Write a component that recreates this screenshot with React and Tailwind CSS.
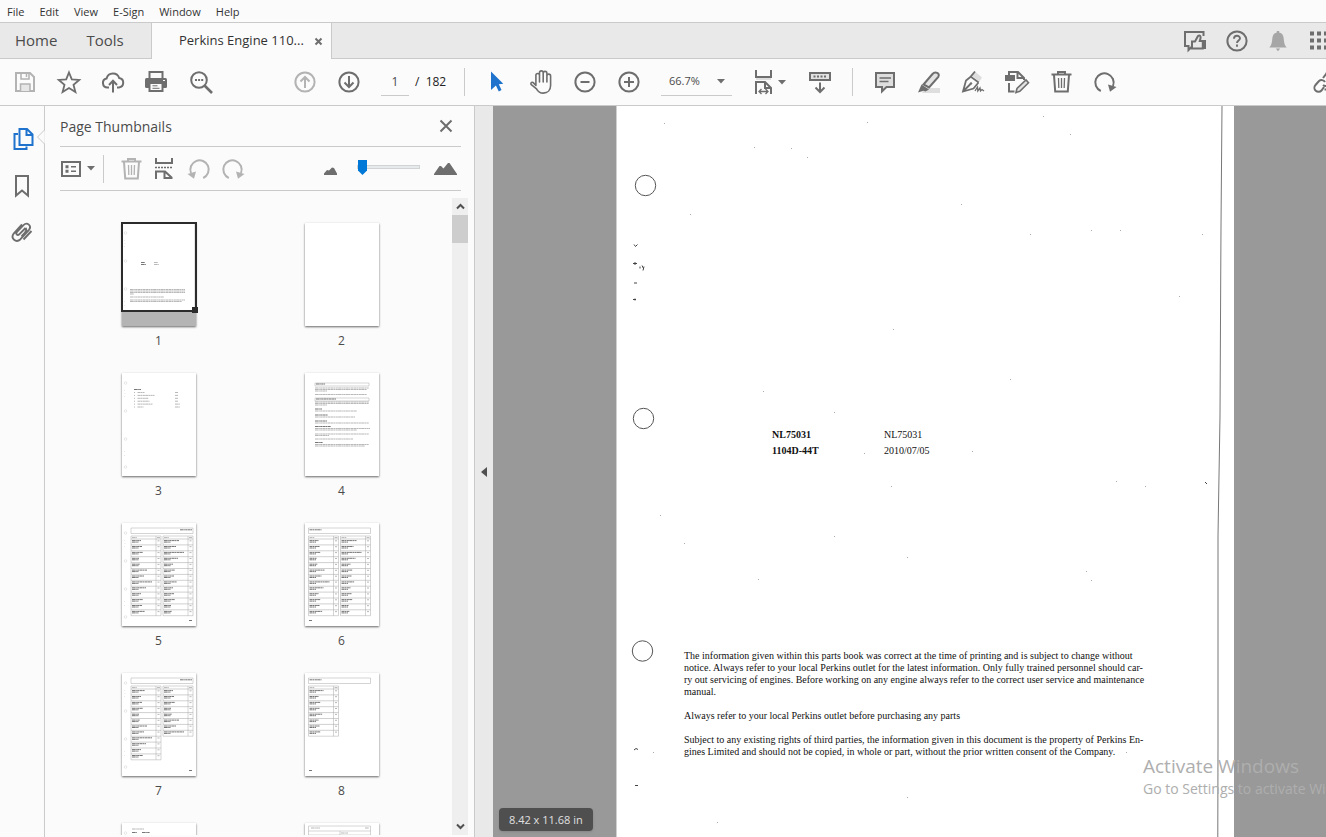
import React, { useState } from "react";

const GRAY = "text-[#6e6e6e]";
const DIM = "text-[#b3b3b3]";

const Icon = ({ children, className = "", size = 28, sw = 2 }) => (
    <svg
        width={size}
        height={size}
        viewBox={`0 0 ${size} ${size}`}
        fill="none"
        stroke="currentColor"
        strokeWidth={sw}
        className={`shrink-0 ${className}`}
        aria-hidden="true"
    >
        {children}
    </svg>
);

const ToolButton = ({ label, dim, children, className = "w-11" }) => (
    <button type="button" aria-label={label} className={`flex h-9 shrink-0 items-center justify-center ${dim ? DIM : GRAY} ${className}`}>
        {children}
    </button>
);

const SaveIcon = () => (
    <Icon>
        <path d="M5 5h14l4 4v14H5z" />
        <path d="M10 5v6h8V5M15.5 6v3" strokeWidth="1.5" />
        <path d="M9.500 23v-7h9.500v7" fill="#e6e6e6" strokeWidth="1.500" />
    </Icon>
);

const StarIcon = () => (
    <Icon sw={1.8}>
        <path d="M14 4.500l2.800 6.900 7.400.5-5.700 4.800 1.900 7.300-6.400-4-6.400 4 1.900-7.300-5.700-4.800 7.400-.5z" />
    </Icon>
);

const CloudIcon = () => (
    <Icon>
        <path d="M10 19.500H8.500a4.600 4.600 0 0 1-.9-9.100 6.600 6.600 0 0 1 12.600-.4 4.800 4.800 0 0 1-.2 9.500h-2" />
        <path d="M14 24.500V13M10 17l4-4.200 4 4.200" />
    </Icon>
);

const PrintIcon = () => (
    <Icon>
        <path d="M6.500 10V4h13v6" />
        <rect x="2" y="10" width="22" height="10" rx="1.500" fill="currentColor" stroke="none" />
        <rect x="6.500" y="15" width="13" height="8" fill="#fbfbfb" />
        <path d="M9.500 17.800h5M9.500 20.300h7" strokeWidth="1" />
        <path d="M20 12.500h2" stroke="#fbfbfb" strokeWidth="1.200" />
    </Icon>
);

const FindIcon = () => (
    <Icon>
        <circle cx="12" cy="12" r="7.800" />
        <path d="M17.500 17.500l7.500 7.500" strokeWidth="2.600" />
        <path d="M8 12h2M11.100 12h2M14.200 12h2" />
    </Icon>
);

const CircleIcon = ({ d }) => (
    <Icon>
        <circle cx="14" cy="14" r="9.600" />
        <path d={d} />
    </Icon>
);

const CursorIcon = () => (
    <Icon className="text-[#1f73cc]">
        <path d="M8 3.500l12.300 12.300-4.500.4 2.700 5.800-2.700 1.600-2.900-6L8 22z" fill="currentColor" stroke="none" />
    </Icon>
);

const HandIcon = () => (
    <Icon sw={1.6}>
        <path d="M8.900 17.500V7.300a1.800 1.800 0 0 1 3.600 0V14 4.700a1.800 1.800 0 0 1 3.700 0V14 5.200a1.800 1.800 0 0 1 3.700 0V14 8a1.800 1.800 0 0 1 3.700 0v9.500c0 4.600-3 7.600-7.300 7.600-3.600 0-5.300-1.500-6.800-4.300L4 16.300c-.7-1.600 1.300-2.700 2.500-1.400z" strokeLinejoin="round" />
    </Icon>
);

const FitWidthIcon = () => (
    <Icon>
        <path d="M6 2v7h15V2" />
        <path d="M6 11h15" stroke="#dedede" />
        <path d="M6 26V14h9l6 6v6M15 14v6h6" />
        <path d="M9 23.500h9M11.500 21L9 23.500l2.500 2.500M15.500 21l2.500 2.500-2.500 2.500" strokeWidth="1.300" />
    </Icon>
);

const KeyboardIcon = () => (
    <Icon>
        <rect x="4" y="5" width="20" height="7" fill="#e3e3e3" />
        <path d="M7.500 8.500h14" strokeDasharray="2 1.500" />
        <path d="M14 14.500v9M9.500 19.500l4.500 4.500 4.500-4.500" />
    </Icon>
);

const CommentIcon = () => (
    <Icon>
        <path d="M5 5h18v14h-7.500L11 23.300V19H5z" fill="#dedede" />
        <path d="M8.500 10h11.500M8.500 13.500h9" strokeWidth="1.300" />
    </Icon>
);

const HighlightIcon = () => (
    <Icon>
        <path d="M9 20h16v5H7z" fill="#dedede" stroke="none" />
        <path d="M8.500 16.500L17.500 6c2.500-3 8-1 5.800 2.800L14 19.500z" fill="#e3e3e3" />
        <path d="M6.500 16.500l7.500 5-3.500 2-2-.8L3 24.500z" fill="currentColor" stroke="none" />
    </Icon>
);

const SignIcon = () => (
    <Icon sw={1.8}>
        <path d="M16.500 4l6.500 5.500-2.500 4-7.500-5.500z" fill="#dedede" stroke="none" />
        <path d="M16 3.500l-4.300 5.200 8 5.800M11.700 8.700L7 12.500 4 23.500l10.500-3 5-6M4.500 23l7-7" />
        <circle cx="12" cy="15.500" r="1.200" fill="currentColor" stroke="none" />
        <path d="M16 23l2.500-4 .3 4 2.200-3 .5 3 1.500-1.500 2 1.500" strokeWidth="1.300" />
    </Icon>
);

const EditPdfIcon = () => (
    <Icon>
        <rect x="2" y="7" width="10" height="6" fill="currentColor" stroke="none" />
        <path d="M6 7V4h9l6 6v2M14.500 4v6H21M6 15v8.500h5.500" />
        <path d="M13 24.500l1-4 9-8.500 2.500 2.800-8.700 8.500z" fill="#e3e3e3" strokeWidth="1.600" />
    </Icon>
);

const TrashIcon = () => (
    <Icon>
        <path d="M4.500 6.500h20M11 6V4h7v2M7 7l1.200 16.500h12.600L22 7" />
        <path d="M11.500 10l.3 10M14.500 10v10M17.500 10l-.3 10" strokeWidth="1.300" />
    </Icon>
);

const RedoIcon = ({ className }) => (
    <Icon className={className}>
        <path d="M9.800 23A9.200 9.200 0 1 1 22 18" />
        <path d="M17 16.500l8.500 2.500-6.500 4.800z" fill="currentColor" stroke="none" />
    </Icon>
);

const LinkIcon = () => (
    <Icon>
        <path d="M12 10l3-4a4 4 0 0 1 7 4l-4 6a4 4 0 0 1-6 1" />
        <path d="M14 14a4 4 0 0 0-6-1l-3.500 4a4 4 0 0 0 6 5.500L13 19" />
        <path d="M17 18v7M13.500 21.500h7" />
    </Icon>
);

const ShareIcon = () => (
    <Icon>
        <path d="M22.500 9V5H4v14h3.500v4l4-4" />
        <path d="M11 14.500h3l3-5.500c1.800-1.300 3 .3 2.500 2.300l-.7 2.700h3v7.500H11z" fill="#e9e9e9" />
        <rect x="21" y="13" width="4" height="9" fill="currentColor" stroke="none" />
    </Icon>
);

const HelpIcon = () => (
    <Icon>
        <circle cx="14" cy="14" r="9.600" />
        <path d="M11 11.800c0-4 6-3.800 6-.5 0 2.200-3 2.300-3 4.700M14 17.500v2.200" strokeWidth="1.900" />
    </Icon>
);

const BellIcon = () => (
    <Icon className="text-[#a6a6a6]">
        <path d="M12.800 4h2.400v1.500c3 .6 4.300 3 4.500 6 .3 4.500 1 7 3 9H5.300c2-2 2.700-4.500 3-9 .2-3 1.500-5.400 4.500-6zM11.800 21.500h4.400l-2.200 2.700z" fill="currentColor" stroke="none" />
    </Icon>
);

const AppsIcon = () => (
    <Icon>
        <path d="M5 6.500h19M5 13.500h19M5 20.500h19" strokeWidth="4" strokeDasharray="4 3" />
    </Icon>
);

const Caret = ({ className = "" }) => (
    <svg width="8" height="5" viewBox="0 0 8 5" className={`pointer-events-none shrink-0 fill-[#6e6e6e] ${className}`} aria-hidden="true">
        <path d="M0 0h8L4 4.500z" />
    </svg>
);

const Divider = ({ className = "" }) => <div className={`h-7 w-px shrink-0 bg-[#cacaca] ${className}`} />;

/* ---------- thumbnails ---------- */

const TextLine = ({ x, y, w, bold }) => (
    <path d={`M${x} ${y}h${w}`} stroke={bold ? "#666" : "#999"} strokeWidth={bold ? 0.9 : 0.7} strokeDasharray="3 .3 1.500 .4 2.200 .3" />
);

const Holes = () => (
    <g fill="none" stroke="#d0d0d0" strokeWidth=".5">
        {[10, 38, 66, 94].map((y) => <circle key={y} cx="3.500" cy={y} r="1.300" />)}
        <path d="M2.500 17v1M3 20v1M2.500 23v1M2.500 78v1M2.500 82v1" />
    </g>
);

const CoverThumb = () => (
    <>
        <Holes />
        <TextLine x={19} y={39.5} w={4} bold />
        <TextLine x={19} y={41.5} w={5} bold />
        <TextLine x={32} y={39.5} w={4} />
        <TextLine x={32} y={41.5} w={5} />
        {[66.5, 68, 69.5].map((y) => <TextLine key={y} x={8} y={y} w={55} />)}
        <TextLine x={8} y={71} w={4} />
        <TextLine x={8} y={74} w={34} />
        <TextLine x={8} y={77} w={55} />
        <TextLine x={8} y={78.5} w={52} />
        <path d="M73 0v104" stroke="#aaa" strokeWidth=".6" />
    </>
);

const CONTENTS = [7, 17, 11, 12, 15, 6];

const ContentsThumb = () => (
    <>
        <Holes />
        <TextLine x={12} y={16.5} w={7} bold />
        {CONTENTS.map((w, i) => (
            <g key={i}>
                <TextLine x={12} y={19.5 + i * 2.9} w={1} />
                <TextLine x={15.5} y={19.5 + i * 2.9} w={w} />
                <TextLine x={53} y={19.5 + i * 2.9} w={i > 3 ? 5 : 3} />
            </g>
        ))}
    </>
);

const INTRO_LINES = [
    [15, 54], [16.5, 52], [18, 12], [21.5, 52], [29, 54], [30.5, 54], [32, 12],
    [38, 42], [44, 40], [50, 54], [55.5, 55], [57, 42], [61, 54], [62.5, 14],
    [66, 38], [71.5, 54], [73, 50],
];

const IntroThumb = () => (
    <>
        <path d="M10 10h54v3H10zM10 25h54v3H10z" fill="none" stroke="#aaa" strokeWidth=".5" />
        <TextLine x={11} y={11} w={9} bold />
        <TextLine x={11} y={26} w={20} bold />
        {[36, 42, 48, 53.5, 69.5].map((y, i) => <TextLine key={y} x={10} y={y} w={[7, 13, 12, 16, 8][i]} bold />)}
        {INTRO_LINES.map(([y, w]) => <TextLine key={y} x={10} y={y} w={w} />)}
    </>
);

const NAME_WIDTHS = [9, 10, 11, 7, 8, 15, 12, 20, 14, 9, 11, 10, 13];

const IndexColumn = ({ x, rows, seed = 0 }) => {
    const bottom = 16 + rows * 5.9;
    return (
        <g>
            <path d={`M${x} 13h30V${bottom}h-30zM${x + 25} 13V${bottom}`} fill="none" stroke="#a8a8a8" strokeWidth=".5" />
            <TextLine x={x + 1} y={14.6} w={5} />
            <TextLine x={x + 26} y={14.6} w={3} />
            {Array.from({ length: rows }, (_, i) => {
                const y = 16 + i * 5.9;
                return (
                    <g key={i}>
                        <path d={`M${x} ${y}h30`} stroke="#a0a0a0" strokeWidth=".5" />
                        <TextLine x={x + 1} y={y + 1.6} w={NAME_WIDTHS[(i + seed) % 13]} bold />
                        <TextLine x={x + 1} y={y + 3.1} w={6.5} bold />
                        <TextLine x={x + 26.5} y={y + 1.8} w={2} />
                    </g>
                );
            })}
        </g>
    );
};

const IndexThumb = ({ side, cols }) => {
    const x = side === "right" ? 9 : 3.5;
    return (
        <>
            {side === "right" && <Holes />}
            <path d={`M${x} 5h62v5.500h-62z`} fill="none" stroke="#a8a8a8" strokeWidth=".5" />
            <TextLine x={side === "right" ? 58 : 4.5} y={6.8} w={12} bold />
            {cols.map((rows, i) => <IndexColumn key={i} x={x + i * 32} rows={rows} seed={i * 5 + rows} />)}
            <TextLine x={side === "right" ? 67 : 4} y={97.5} w={3} bold />
        </>
    );
};

const SectionThumb = () => (
    <>
        <Holes />
        <TextLine x={10} y={6} w={12} />
        <TextLine x={10} y={9.5} w={5} bold />
        <TextLine x={20} y={9.5} w={8} bold />
    </>
);

const PartsThumb = () => (
    <>
        <path d="M3.500 3h62v30h-62zM3.500 8h62M35 8v20M3.500 12h62" fill="none" stroke="#a8a8a8" strokeWidth=".5" />
        <TextLine x={6} y={5} w={9} />
        <TextLine x={60} y={5} w={4} />
        <TextLine x={36} y={10} w={7} />
    </>
);

const THUMBS = [
    <CoverThumb />,
    null,
    <ContentsThumb />,
    <IntroThumb />,
    <IndexThumb side="right" cols={[13, 13]} />,
    <IndexThumb side="left" cols={[13, 13]} />,
    <IndexThumb side="right" cols={[12, 8]} />,
    <IndexThumb side="left" cols={[8]} />,
    <SectionThumb />,
    <PartsThumb />,
];

const Thumbnail = ({ number, selected, onSelect, children }) => (
    <button type="button" onClick={onSelect} className="flex h-[150px] flex-col items-center">
        <span className="relative block h-[103px] w-[74px] bg-white shadow-[0_1px_2px_rgba(0,0,0,0.6)]">
            <svg width="74" height="103" viewBox="0 0 74 103" aria-hidden="true">{children}</svg>
            {selected && (
                <>
                    <span className="absolute inset-x-0 bottom-0 h-[14px] bg-[#b4b4b4]" />
                    <span className="absolute -inset-x-px -top-px h-[90px] border-2 border-[#2b2b2b]" />
                    <span className="absolute -right-[2px] bottom-[13px] size-[6px] bg-[#2b2b2b]" />
                </>
            )}
        </span>
        <span className="mt-[6px] text-[12px] leading-[18px] text-[#4b4b4b]">{number}</span>
    </button>
);

/* ---------- scanned page ---------- */

const SPECKS = [
    [48, 17], [251, 16], [427, 10], [454, 28], [138, 41], [175, 42], [191, 51], [74, 108], [345, 98], [414, 128],
    [475, 124], [504, 124], [586, 128], [563, 190], [277, 223], [147, 285], [218, 306], [394, 273], [248, 347], [356, 345],
    [275, 380], [500, 375], [44, 409], [68, 437], [218, 430], [291, 451], [142, 473], [470, 465], [475, 474], [529, 380],
    [291, 691], [101, 716], [510, 646], [37, 646],
];

const ScanMarks = () => (
    <svg width="618" height="857" viewBox="0 0 618 857" fill="none" className="pointer-events-none absolute top-0 -left-px" aria-hidden="true">
        <g stroke="#555" strokeWidth="1">
            <circle cx="29.500" cy="79.500" r="10.200" />
            <circle cx="27.500" cy="312.500" r="10.200" />
            <circle cx="26.500" cy="545" r="10.200" />
        </g>
        <path d="M606 0L605 120 604 310 602 430 602 640 601.500 857" stroke="#777" strokeWidth="1" />
        <path d="M18 138.500l1.500 2 2-2M17 157.500h4M19 156v3M24 160.500v2M26 159.500l1.500 3M28 160.500l-1 4M18 177h3M17 193.500h3M19 192.500v2M18 644l2-1.500 2 1M19 679.500h3M589 376l2 2" stroke="#444" />
        <g fill="#aaa">
            {SPECKS.map(([x, y]) => <rect key={`${x}-${y}`} x={x} y={y} width="1" height="1" />)}
        </g>
    </svg>
);

const DocumentPage = () => (
    <article className="relative ml-[123px] h-[857px] w-[618px] shrink-0 border-l border-[#d0d0d0] bg-white pt-[321px] pl-[67px] font-['Liberation_Serif',serif] text-[10px] leading-[12px] whitespace-nowrap text-[#111]">
        <ScanMarks />
        <dl className="ml-[88px] grid grid-cols-[112px_auto] leading-[16px]">
            <dt className="font-bold">NL75031</dt>
            <dd>NL75031</dd>
            <dt className="font-bold">1104D-44T</dt>
            <dd>2010/07/05</dd>
        </dl>
        <p className="mt-[191px]">
            The information given within this parts book was correct at the time of printing and is subject to change without<br />
            notice. Always refer to your local Perkins outlet for the latest information. Only fully trained personnel should car-<br />
            ry out servicing of engines. Before working on any engine always refer to the correct user service and maintenance<br />
            manual.
        </p>
        <p className="mt-3">Always refer to your local Perkins outlet before purchasing any parts</p>
        <p className="mt-3">
            Subject to any existing rights of third parties, the information given in this document is the property of Perkins En-<br />
            gines Limited and should not be copied, in whole or part, without the prior written consent of the Company.
        </p>
    </article>
);

/* ---------- window parts ---------- */

const MENUS = ["File", "Edit", "View", "E-Sign", "Window", "Help"];

const MenuBar = () => (
    <nav className="flex h-[23px] shrink-0 items-center gap-[15px] border-b border-[#cacaca] bg-[#fbfbfb] px-[7px] pt-[2px] text-[11px] text-[#333]">
        {MENUS.map((m) => <button key={m} type="button">{m}</button>)}
    </nav>
);

const TabBar = () => (
    <div className="flex h-9 shrink-0 overflow-hidden bg-[#e9e9e9]">
        <div className="flex w-[151px] items-center gap-[29px] border-b border-[#cacaca] pl-[15px] text-[15px] text-[#4b4b4b]">
            <button type="button">Home</button>
            <button type="button">Tools</button>
        </div>
        <div className="flex w-[181px] items-center justify-between border-x border-[#cacaca] bg-[#fbfbfb] pr-2 pl-[27px] text-[13px] text-[#323232]">
            <span>Perkins Engine 110...</span>
            <button type="button" aria-label="Close tab" className={GRAY}>
                <Icon size={9} sw={2}><path d="M1.500 1.500l6 6M7.500 1.500l-6 6" /></Icon>
            </button>
        </div>
        <div className="flex flex-1 items-center justify-end border-b border-[#cacaca]">
            <div className="-mr-[13px] flex">
                <ToolButton label="Share feedback" className="w-[42px]"><ShareIcon /></ToolButton>
                <ToolButton label="Help" className="w-[41px]"><HelpIcon /></ToolButton>
                <ToolButton label="Notifications" className="w-[41px]"><BellIcon /></ToolButton>
                <ToolButton label="Apps" className="w-[41px]"><AppsIcon /></ToolButton>
            </div>
        </div>
    </div>
);

const Toolbar = () => {
    const [page, setPage] = useState("1");
    return (
        <div className="flex h-[47px] shrink-0 items-center overflow-hidden border-b border-[#cacaca] bg-[#fbfbfb] pl-[3px] text-[12px] text-[#222]">
            <ToolButton label="Save" dim><SaveIcon /></ToolButton>
            <ToolButton label="Star"><StarIcon /></ToolButton>
            <ToolButton label="Upload"><CloudIcon /></ToolButton>
            <ToolButton label="Print"><PrintIcon /></ToolButton>
            <ToolButton label="Find"><FindIcon /></ToolButton>
            <div className="ml-[60px] flex items-center">
                <ToolButton label="Previous page" dim><CircleIcon d="M14 20V9.500M9.500 13.500L14 9l4.500 4.500" /></ToolButton>
                <ToolButton label="Next page"><CircleIcon d="M14 8v10.500M9.500 14.500L14 19l4.500-4.500" /></ToolButton>
            </div>
            <input
                aria-label="Page number"
                value={page}
                onChange={(e) => setPage(e.target.value)}
                className="ml-[10px] h-7 w-7 border-b border-[#cacaca] text-center text-[#4b4b4b] outline-none"
            />
            <span className="ml-[6px] w-[49px]">/ &nbsp;182</span>
            <Divider />
            <div className="ml-[10px] flex">
                <ToolButton label="Select"><CursorIcon /></ToolButton>
                <ToolButton label="Pan"><HandIcon /></ToolButton>
                <ToolButton label="Zoom out"><CircleIcon d="M9.500 14h9" /></ToolButton>
                <ToolButton label="Zoom in"><CircleIcon d="M9 14h10M14 9v10" /></ToolButton>
            </div>
            <div className="ml-[10px] flex h-7 w-[71px] items-center border-b border-[#cacaca] pr-[7px]">
                <select aria-label="Zoom level" defaultValue="66.7%" className="w-full appearance-none pl-2 text-[11px] text-[#4b4b4b] outline-none">
                    <option>50%</option>
                    <option>66.7%</option>
                    <option>100%</option>
                </select>
                <Caret />
            </div>
            <ToolButton label="Fit width" className="ml-[18px] w-9"><FitWidthIcon /><Caret /></ToolButton>
            <ToolButton label="Show toolbar below" className="ml-[12px] w-11"><KeyboardIcon /></ToolButton>
            <Divider className="ml-[10px]" />
            <div className="ml-[10px] flex">
                <ToolButton label="Comment"><CommentIcon /></ToolButton>
                <ToolButton label="Highlight"><HighlightIcon /></ToolButton>
                <ToolButton label="Sign"><SignIcon /></ToolButton>
                <ToolButton label="Edit PDF"><EditPdfIcon /></ToolButton>
                <ToolButton label="Delete"><TrashIcon /></ToolButton>
                <ToolButton label="Rotate"><RedoIcon /></ToolButton>
            </div>
            <div className="-mr-[21px] ml-auto flex">
                <ToolButton label="Share link"><LinkIcon /></ToolButton>
            </div>
        </div>
    );
};

const SideRail = () => (
    <aside className="relative flex w-[45px] shrink-0 flex-col items-center gap-[19px] border-r border-[#cacaca] bg-[#fbfbfb] pt-[19px]">
        <button type="button" aria-label="Page Thumbnails" className="text-[#1f73cc]">
            <Icon>
                <path d="M10 9H6.500v15h12v-2.500" />
                <path d="M11.500 4H19l5.500 5.500V20h-13zM18.500 4v6h6" fill="#fbfbfb" />
            </Icon>
        </button>
        <button type="button" aria-label="Bookmarks" className={GRAY}>
            <Icon><path d="M8 4h12v19.500l-6-5-6 5z" /></Icon>
        </button>
        <button type="button" aria-label="Attachments" className={GRAY}>
            <Icon>
                <path d="M17.500 9l-6 6.200c-1.900 2.100-4.300-.2-2.500-2.300l6.500-6.800c3.800-3.600 8.500.7 5.500 4.700l-8.500 9.400c-4.500 4.300-10.300-.9-6.800-5.700L14 5.500M17.500 9c1.800 2 .5 3.500-.7 4.800l-3.300 3.700M23.500 12l-8 8.500" strokeWidth="1.900" />
            </Icon>
        </button>
        <svg width="9" height="16" viewBox="0 0 9 16" className="absolute top-[23px] -right-px fill-[#fbfbfb] stroke-[#cacaca]" aria-hidden="true">
            <path d="M8.500 0v1L1.500 8l7 7v1" />
            <path d="M9 2v12" stroke="#fbfbfb" />
        </svg>
    </aside>
);

const ThumbnailsPanel = () => {
    const [selected, setSelected] = useState(1);
    const [size, setSize] = useState(0);

    return (
        <section className="flex w-[430px] shrink-0 flex-col border-r border-[#cacaca] bg-[#fbfbfb] pl-[15px]">
            <header className="mr-[13px] flex h-[41px] shrink-0 items-center justify-between border-b border-[#cacaca] pr-2">
                <h2 className="text-[14px] text-[#4b4b4b]">Page Thumbnails</h2>
                <button type="button" aria-label="Close panel" className={GRAY}>
                    <Icon size={14}><path d="M1.500 1.500l11 11M12.500 1.500l-11 11" /></Icon>
                </button>
            </header>
            <div className="mr-[13px] flex h-11 shrink-0 items-center border-b border-[#cacaca]">
                <button type="button" aria-label="Options" className={`flex items-center gap-[5px] ${GRAY}`}>
                    <Icon size={22}>
                        <rect x="2" y="4" width="18" height="14" />
                        <path d="M5.500 8.800h3M5.500 13.200h3" strokeWidth="3" />
                        <path d="M11 8.800h5M11 13.200h5" strokeWidth="1.500" />
                    </Icon>
                    <Caret />
                </button>
                <Divider className="ml-[8px]" />
                <div className="ml-[10px] flex items-center">
                    <ToolButton label="Delete pages" dim className="w-[34px]"><TrashIcon /></ToolButton>
                    <ToolButton label="Split pages" className="w-[34px]">
                        <Icon>
                            <path d="M5 3v5h16V3M5 24v-7.500h9l6.500 6V24M13.500 16.500v6.500h7" />
                            <path d="M4 12.500h18" strokeDasharray="2 1" strokeWidth="1.500" />
                        </Icon>
                    </ToolButton>
                    <ToolButton label="Rotate left" dim className="w-[34px]"><RedoIcon className="-scale-x-100" /></ToolButton>
                    <ToolButton label="Rotate right" dim className="w-[34px]"><RedoIcon /></ToolButton>
                </div>
                <div className="mr-[4px] ml-auto flex items-center">
                    <svg width="13" height="8" viewBox="0 0 13 8" className="mt-1 fill-[#6e6e6e]" aria-hidden="true">
                        <path d="M0 8V6.500L3 3l2 .5L8 .5l2 .5 3 5.500V8z" />
                    </svg>
                    <input
                        type="range"
                        aria-label="Thumbnail size"
                        min="0"
                        max="10"
                        value={size}
                        onChange={(e) => setSize(Number(e.target.value))}
                        className="mb-[3px] ml-5 h-4 w-[63px] appearance-none bg-transparent [&::-webkit-slider-runnable-track]:h-1 [&::-webkit-slider-runnable-track]:border [&::-webkit-slider-runnable-track]:border-[#d0d4d4] [&::-webkit-slider-runnable-track]:bg-[#e7eaea] [&::-webkit-slider-thumb]:-mt-[6px] [&::-webkit-slider-thumb]:h-[15px] [&::-webkit-slider-thumb]:w-[9px] [&::-webkit-slider-thumb]:appearance-none [&::-webkit-slider-thumb]:bg-[#0078d7] [&::-webkit-slider-thumb]:[clip-path:polygon(0_0,100%_0,100%_70%,50%_100%,0_70%)]"
                    />
                    <svg width="23" height="12" viewBox="0 0 23 12" className="ml-[14px] fill-[#6e6e6e]" aria-hidden="true">
                        <path d="M0 12v-1L5.500 3h1.500L9.500 5.500 14 0h1.500L23 11v1z" />
                    </svg>
                </div>
            </div>
            <div className="flex min-h-0 flex-1 pt-[7px] pb-[2px]">
                <div className="grid flex-1 auto-rows-min grid-cols-2 overflow-hidden pt-[25px] pr-[19px] pl-[7px]">
                    {THUMBS.map((art, i) => (
                        <Thumbnail key={i} number={i + 1} selected={selected === i + 1} onSelect={() => setSelected(i + 1)}>
                            {art}
                        </Thumbnail>
                    ))}
                </div>
                <div className="mr-[6px] flex w-4 flex-col items-center bg-[#efefef] text-[#505050]">
                    <button type="button" aria-label="Scroll up" className="flex h-[17px] items-center">
                        <Icon size={9}><path d="M1 6.500L4.500 3 8 6.500" /></Icon>
                    </button>
                    <div className="h-7 w-full bg-[#cdcdcd]" />
                    <button type="button" aria-label="Scroll down" className="mt-auto flex h-[17px] items-center">
                        <Icon size={9}><path d="M1 2.500L4.500 6 8 2.500" /></Icon>
                    </button>
                </div>
            </div>
        </section>
    );
};

const App = () => {
    return (
        <div className="flex h-screen flex-col overflow-hidden bg-[#fbfbfb] font-['Open_Sans','Noto_Sans',sans-serif]">
            <MenuBar />
            <TabBar />
            <Toolbar />
            <div className="flex min-h-0 flex-1">
                <SideRail />
                <ThumbnailsPanel />
                <button type="button" aria-label="Collapse panel" className="flex w-[18px] shrink-0 items-center justify-center bg-[#e9e9e9]">
                    <svg width="6" height="10" viewBox="0 0 6 10" className="fill-[#505050]" aria-hidden="true"><path d="M6 0v10L0 5z" /></svg>
                </button>
                <main className="relative flex-1 overflow-hidden bg-[#999]">
                    <DocumentPage />
                    <div className="absolute bottom-[6px] left-[6px] rounded bg-[#4f4f4f] px-[10px] text-[11px] leading-[23px] text-[#e0e0e0] shadow">
                        8.42 x 11.68 in
                    </div>
                    <div className="pointer-events-none absolute bottom-[38px] left-[650px] whitespace-nowrap text-[#aeaeae]">
                        <p className="text-[19px] leading-[26px]">Activate Windows</p>
                        <p className="text-[14px] leading-[20px]">Go to Settings to activate Windows.</p>
                    </div>
                </main>
            </div>
        </div>
    );
};

export default App;
